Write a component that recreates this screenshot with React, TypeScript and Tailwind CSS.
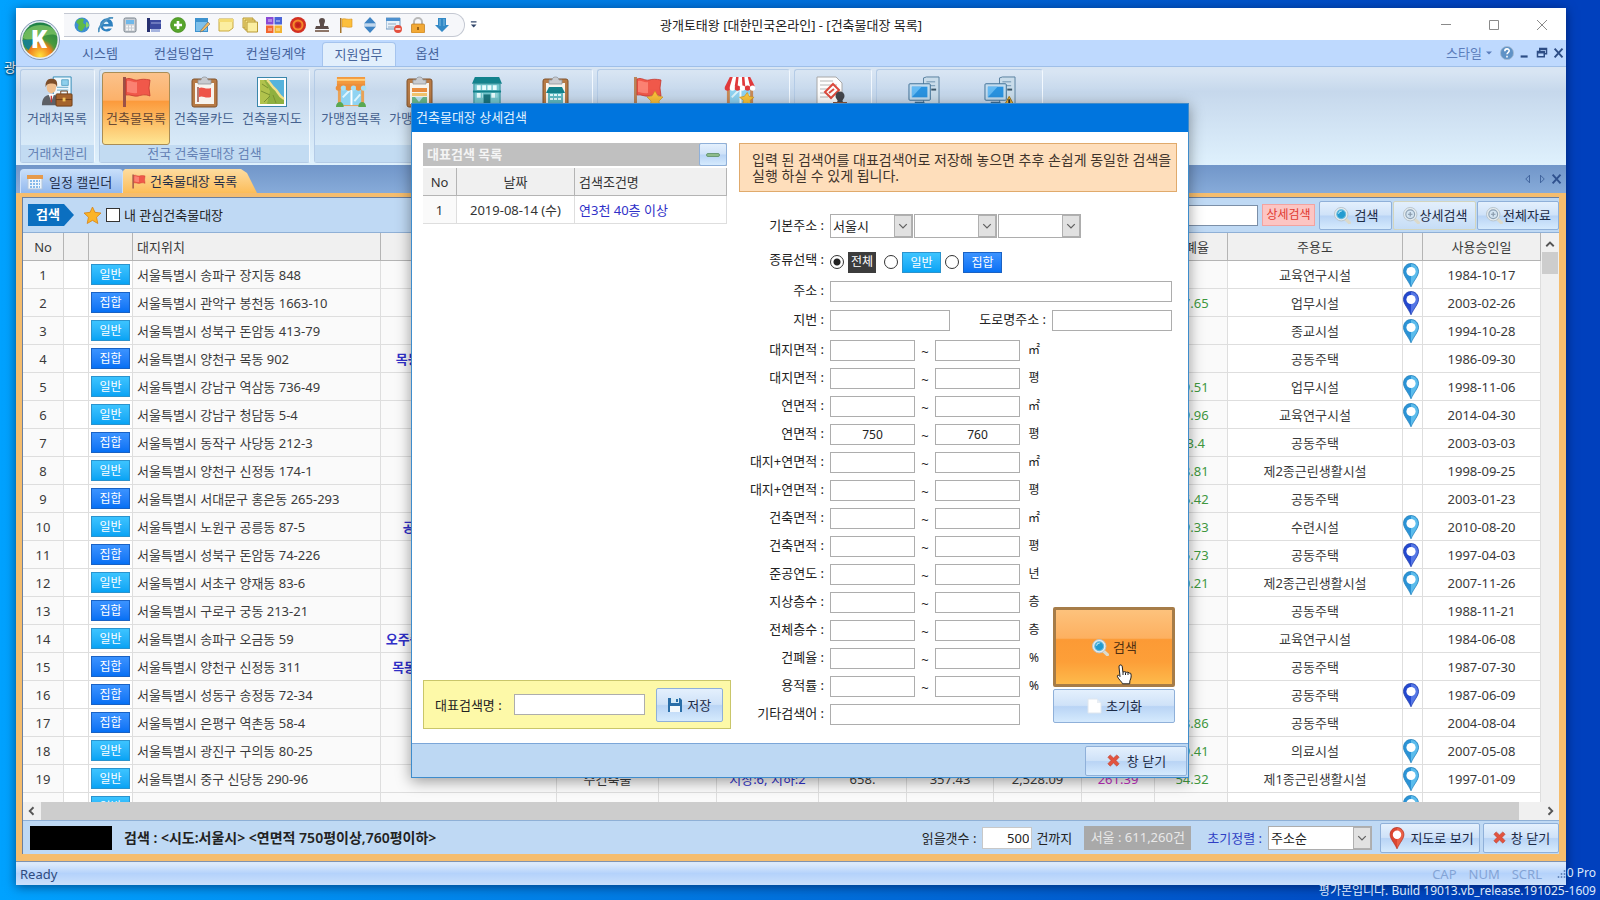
import React from "react";

type Kind = "일반" | "집합";

type Row = {
  kind: Kind;
  addr: string;
  name?: string;
  ratio?: string;
  use: string;
  pin?: "light" | "dark";
  date: string;
  extra?: string[];
};

const rows: Row[] = [
  { kind: "일반", addr: "서울특별시 송파구 장지동 848", use: "교육연구시설", pin: "light", date: "1984-10-17" },
  { kind: "집합", addr: "서울특별시 관악구 봉천동 1663-10", ratio: "57.65", use: "업무시설", pin: "dark", date: "2003-02-26" },
  { kind: "일반", addr: "서울특별시 성북구 돈암동 413-79", use: "종교시설", pin: "light", date: "1994-10-28" },
  { kind: "집합", addr: "서울특별시 양천구 목동 902", name: "목동신시가지아파트 902동", use: "공동주택", date: "1986-09-30" },
  { kind: "일반", addr: "서울특별시 강남구 역삼동 736-49", ratio: "59.51", use: "업무시설", pin: "light", date: "1998-11-06" },
  { kind: "일반", addr: "서울특별시 강남구 청담동 5-4", ratio: "49.96", use: "교육연구시설", pin: "light", date: "2014-04-30" },
  { kind: "집합", addr: "서울특별시 동작구 사당동 212-3", ratio: "53.4", use: "공동주택", date: "2003-03-03" },
  { kind: "일반", addr: "서울특별시 양천구 신정동 174-1", ratio: "58.81", use: "제2종근린생활시설", date: "1998-09-25" },
  { kind: "집합", addr: "서울특별시 서대문구 홍은동 265-293", ratio: "56.42", use: "공동주택", date: "2003-01-23" },
  { kind: "일반", addr: "서울특별시 노원구 공릉동 87-5", name: "공릉청소년문화정보센터", ratio: "39.33", use: "수련시설", pin: "light", date: "2010-08-20" },
  { kind: "집합", addr: "서울특별시 성북구 돈암동 74-226", ratio: "55.73", use: "공동주택", pin: "dark", date: "1997-04-03" },
  { kind: "일반", addr: "서울특별시 서초구 양재동 83-6", ratio: "50.21", use: "제2종근린생활시설", pin: "light", date: "2007-11-26" },
  { kind: "집합", addr: "서울특별시 구로구 궁동 213-21", use: "공동주택", date: "1988-11-21" },
  { kind: "일반", addr: "서울특별시 송파구 오금동 59", name: "오주중학교 본관동 및 체육관동", use: "교육연구시설", date: "1984-06-08" },
  { kind: "집합", addr: "서울특별시 양천구 신정동 311", name: "목동신시가지아파트 1311동", use: "공동주택", date: "1987-07-30" },
  { kind: "집합", addr: "서울특별시 성동구 송정동 72-34", use: "공동주택", pin: "dark", date: "1987-06-09" },
  { kind: "집합", addr: "서울특별시 은평구 역촌동 58-4", ratio: "58.86", use: "공동주택", date: "2004-08-04" },
  { kind: "일반", addr: "서울특별시 광진구 구의동 80-25", ratio: "59.41", use: "의료시설", pin: "light", date: "2007-05-08" },
  {
    kind: "일반", addr: "서울특별시 중구 신당동 290-96", ratio: "54.32", use: "제1종근린생활시설", pin: "light", date: "1997-01-09",
    extra: ["주건축물", "", "지상:6, 지하:2", "658.", "357.43", "2,528.09", "261.39"],
  },
  { kind: "일반", addr: "", use: "", pin: "light", date: "" },
];

const extraColors = ["", "", "text-[#3030c8]", "", "", "", "text-[#c22fc2]"];

const ranges = [
  ["대지면적", "㎡"],
  ["대지면적", "평"],
  ["연면적", "㎡"],
  ["연면적", "평", "750", "760"],
  ["대지+연면적", "㎡"],
  ["대지+연면적", "평"],
  ["건축면적", "㎡"],
  ["건축면적", "평"],
  ["준공연도", "년"],
  ["지상층수", "층"],
  ["전체층수", "층"],
  ["건폐율", "%"],
  ["용적률", "%"],
];

const blueBtn =
  "flex items-center justify-center rounded-[2px] border border-[#8fb0d9] bg-[linear-gradient(#e4f0fd,#cfe2f8_48%,#b9d4f5_52%,#d5eafd)] text-[#1c2a45]";
const field = "border border-[#adadad] bg-white px-1 outline-none";

function Svg({ size = 16, box = 16, children }: { size?: number; box?: number; children: React.ReactNode }) {
  return (
    <svg width={size} height={size} viewBox={`0 0 ${box} ${box}`} className="shrink-0" aria-hidden="true">
      {children}
    </svg>
  );
}

function Pin({ fill, shade, stroke, size = 24 }: { fill: string; shade: string; stroke: string; size?: number }) {
  return (
    <Svg size={size} box={24}>
      <path d="M12 .5C7.600.5 4.500 4 4.500 8.300 4.500 13 9 17 12 23.800 15 17 19.500 13 19.500 8.300 19.500 4 16.400.5 12 .5Z" fill={fill} stroke={stroke} strokeWidth=".8" />
      <path d="M12 1v22c3-6.500 7-10 7-14.700C19 4.300 16 1 12 1Z" fill={shade} />
      <circle cx="12" cy="8.500" r="4.600" fill="#fff" />
    </Svg>
  );
}

function Magnifier({ on }: { on?: boolean }) {
  return (
    <Svg size={18}>
      <path d="M10.500 11l4 3.800" stroke="#dcdacb" strokeWidth="3" strokeLinecap="round" />
      <circle cx="7.300" cy="7.300" r="6" fill="#e4ebef" stroke="#b6c2c9" strokeWidth=".8" />
      <circle cx="7.300" cy="7.300" r="3.900" fill={on ? "#239bd0" : "#d3e4f2"} stroke={on ? "#62b9dd" : "#8da1b3"} />
      {!on && <path d="M7.300 5.300v4M5.300 7.300h4" stroke="#8596a8" />}
      {on && <path d="M4.800 6.800c.5-1.600 1.500-2.200 3-2.300" stroke="#bfeaf9" fill="none" />}
    </Svg>
  );
}

function RedX() {
  return (
    <Svg size={15}>
      <path d="M2 4.500L4.500 2 8 5.300 11.500 2 14 4.500 10.700 8 14 11.500 11.500 14 8 10.700 4.500 14 2 11.500 5.300 8Z" fill="#e2533f" stroke="#b8402f" strokeWidth=".6" />
    </Svg>
  );
}

function Flag({ size = 32, star }: { size?: number; star?: boolean }) {
  return (
    <Svg size={size} box={32}>
      <path d="M3 1h3v30H3z" fill={star ? "#b9855a" : "#9c5046"} />
      <path d="M6 3c4-2 8 2 12 1s7-1 12 0l-1 8 1 8c-5-2-8-1-12 0s-8-2-12-1z" fill="#f0584a" stroke="#c5382f" strokeWidth=".8" />
      <path d="M7 5c4-1 6 2 10 1v11c-4 1-7-1-10-1z" fill="#fb8172" />
      {star && <path d="M24 15l3 5 5 1-4 4 1 6-5-3-5 3 1-6-4-4 5-1z" fill="#fbbf3a" stroke="#cb8f1c" strokeWidth=".6" />}
    </Svg>
  );
}

function Clipboard({ kind }: { kind: "flag" | "shop" | "building" }) {
  return (
    <Svg size={32} box={32}>
      <rect x="4" y="3" width="25" height="28" rx="2" fill="#b77a45" stroke="#80522c" />
      <rect x="7" y="7" width="19" height="21" fill="#f7f4ee" />
      <path d="M10 4h3c0-4 7-4 7 0h3v4H10z" fill="#c8cbd0" stroke="#8f949b" strokeWidth=".8" />
      {kind === "flag" && (
        <>
          <path d="M10 11v15" stroke="#9c5046" strokeWidth="1.500" />
          <path d="M11 12c4-2 6 2 12 0v9c-6 2-8-2-12 0z" fill="#ee5548" />
        </>
      )}
      {kind === "shop" && (
        <>
          <path d="M9 12h15v4H9z" fill="#e98d3e" />
          <path d="M9 17h15v3H9z" fill="#f5c66e" />
          <path d="M9 21h15v6H9z" fill="#69b88c" />
          <path d="M12 21h8l-4 5z" fill="#b8e2f2" />
        </>
      )}
      {kind === "building" && (
        <>
          <path d="M10 11h13l3 6H7z" fill="#12828c" />
          <path d="M9 17h15v11H9z" fill="#62bcc4" />
          <path d="M11 19h11M11 23h11" stroke="#e4fbfc" strokeWidth="2" strokeDasharray="3 1" />
        </>
      )}
    </Svg>
  );
}

function Client() {
  return (
    <Svg size={32} box={34}>
      <path d="M13 1h19v20H13z" fill="#eef8fd" stroke="#2d87b3" />
      <path d="M22 4h7v6h-7zM17 12h12M17 15h12" fill="#8ed0ed" stroke="#5fa5c8" />
      <path d="M1 31c0-8 4-11 10-11s9 4 9 11z" fill="#5d6066" />
      <path d="M8 19h6l-3 8z" fill="#fff" />
      <path d="M11 21v7" stroke="#cb3b38" strokeWidth="1.500" />
      <ellipse cx="11" cy="12" rx="5" ry="6.500" fill="#efbf8f" />
      <path d="M5 12c-1-7 3-10 7-9 4 0 6 3 5 9-1-3-2-4-5-4s-6 0-7 4z" fill="#7d4e2a" />
      <rect x="16" y="19" width="17" height="13" rx="1" fill="#a4632d" stroke="#6e3d17" />
      <path d="M21 19v-3h7v3M16 25h17" stroke="#6e3d17" fill="none" />
      <path d="M23 23h3v4h-3z" fill="#f3c35b" />
    </Svg>
  );
}

function MapIcon() {
  return (
    <Svg size={32} box={32}>
      <rect x="1.500" y="1.500" width="29" height="29" fill="#fdfdfd" stroke="#3a86ab" />
      <path d="M4 4h24v24H4z" fill="#55b3dc" />
      <path d="M4 4h7c3 2 4 6 8 9 3 2 3 7 9 10v5H4z" fill="#8fb03f" />
      <path d="M11 4c3 2 4 6 8 9 3 2 3 7 9 10" stroke="#f1e08a" strokeWidth="2.500" fill="none" />
      <path d="M4 4h4l6 11-3 13H4z" fill="#b1c24c" />
      <path d="M6 8l6 4M5 15l9 4M8 26l6-6M20 27l-3-8" stroke="#7a9131" fill="none" />
    </Svg>
  );
}

function Shop({ red }: { red?: boolean }) {
  const a = red ? "#e0393b" : "#ec8f3b";
  const b = red ? "#fff" : "#a8dff5";
  return (
    <Svg size={32} box={33}>
      <path d="M3 12h27v19H3z" fill={red ? "#c98a58" : "#e9a257"} />
      <path d="M6 14h21v16H6z" fill="#8fd3f2" />
      <path d="M17 14v16" stroke="#fff" strokeWidth="2" />
      <path d="M8 22l7-7M20 26l6-7" stroke="#def5fd" strokeWidth="2" />
      {!red && <path d="M2 1h29v8H2z" fill="#f39a3e" />}
      {!red && <path d="M2 4h29" stroke="#ffd181" strokeWidth="2" />}
      <path d={red ? "M6 1h21l5 10H1z" : "M2 8h29v6H2z"} fill={a} />
      {red && <path d="M9 1h3.500l-1.500 10H6zM15 1h3.500l.5 10h-5zM21 1h3.500L27 11h-5z" fill="#fff" />}
      {[0, 1, 2, 3, 4, 5].map((i) => (
        <circle key={i} cx={3.5 + i * 5.2} cy="12.500" r="2.800" fill={i % 2 ? b : a} />
      ))}
      {red && <path d="M24 17l2 4 5 1-4 3 1 6-4-3-5 3 1-6-4-3 5-1z" fill="#fbc53c" stroke="#c98d19" strokeWidth=".6" />}
      {!red && <path d="M1 32c0-7 8-7 8 0zM24 32c0-7 8-7 8 0z" fill="#5aa852" />}
    </Svg>
  );
}

function Building() {
  return (
    <Svg size={32} box={33}>
      <path d="M4 1h25l3 7H1z" fill="#12828c" />
      <path d="M3 8h27v23H3z" fill="#74c7cf" stroke="#2e8c95" />
      <path d="M6 12h21M6 20h6M21 20h6" stroke="#e8fcfd" strokeWidth="5" strokeDasharray="4 1.500" />
      <path d="M2 16h29" stroke="#12828c" strokeWidth="2" />
      <path d="M13 19h7v12h-7z" fill="#1d7780" />
    </Svg>
  );
}

function Stamped() {
  return (
    <Svg size={33} box={33}>
      <path d="M2 1h19l6 6v25H2z" fill="#fdfdfd" stroke="#a8a8a8" />
      <path d="M5 5h13M5 9h17M5 13h8M5 17h6M5 21h8" stroke="#b5b5b5" />
      <path d="M18 8l6 6-8 8-6-6z" fill="none" stroke="#dd4a3d" strokeWidth="2" />
      <path d="M14 17l5-4" stroke="#dd4a3d" strokeWidth="2" />
      <circle cx="25" cy="20" r="4.500" fill="#43464d" />
      <path d="M23 22h4l1 5h-6z" fill="#43464d" />
      <path d="M18 26h14v5H18z" fill="#8f573a" />
    </Svg>
  );
}

function Computer({ warn }: { warn?: boolean }) {
  return (
    <Svg size={32} box={33}>
      <path d="M16 2l3-1h13v30H16z" fill="#c9dcea" stroke="#58809f" />
      <path d="M19 6h9M19 10h9" stroke="#6d93ae" />
      <path d="M24 14h5" stroke="#3a5467" strokeWidth="2" />
      <rect x="1" y="8" width="22" height="17" rx="1" fill="#c3dcee" stroke="#3f7197" />
      <rect x="4" y="11" width="16" height="11" fill="#2a93e0" />
      <path d="M4 22l10-11H4z" fill="#63b9f3" />
      <path d="M7 28h10" stroke="#3f7197" strokeWidth="3" />
      {warn && <path d="M26 21l6 11H20z" fill="#f8bb35" stroke="#9a741e" />}
      {warn && <path d="M26 24v4" stroke="#333" strokeWidth="2" />}
    </Svg>
  );
}

// quick access icons, in toolbar order
const quickIcons: [string, React.ReactNode][] = [
  ["웹", <><circle cx="8" cy="8" r="7.500" fill="#3f8fd0" /><path d="M2 5c2-4 6-4 8-3l-1 4 3 2-4 6C4 14 3 10 5 8z" fill="#5fbb46" /><path d="M12 5c2 0 3 2 3 4l-3 2z" fill="#8bd765" /></>],
  ["탐색기", <><path d="M14.500 5.500A6.500 6.500 0 1 0 14 11.500h-4a3 3 0 0 1-5-2h10z" fill="#2e81c0" /><path d="M5.500 7h5a2.500 2.500 0 0 0-5 0z" fill="#d9effb" /><path d="M1 15C-1 11 9-1 15 1" stroke="#4f93c0" strokeWidth="2" fill="none" /></>],
  ["계산기", <><rect x="2" y="1" width="12" height="14" rx="1.500" fill="#c8cdd3" stroke="#78828c" /><path d="M4 3h8v4H4z" fill="#6fb8ea" /><path d="M4 9.500h8M4 12.500h8" stroke="#f6f6f6" strokeWidth="2" strokeDasharray="2 1" /></>],
  ["문서", <><path d="M1 1h3v14H1z" fill="#27306f" /><path d="M4 3h11v9H4z" fill="#3c4aa0" /><path d="M5 6h10" stroke="#c7d0f3" strokeWidth=".7" /><path d="M5 12h9v3H5z" fill="#a6b4df" /></>],
  ["추가", <><circle cx="8" cy="8" r="7.500" fill="#57a52c" stroke="#3e8419" strokeWidth=".6" /><path d="M8 4v8M4 8h8" stroke="#fff" strokeWidth="2.600" /></>],
  ["편집", <><path d="M1 1h13v14H1z" fill="#3d93cf" /><path d="M2 5h11v9H2z" fill="#7fc0ea" /><path d="M7 13l7-8 2 2-7 7-3 1z" fill="#f1b95e" stroke="#5d6b76" strokeWidth=".6" /></>],
  ["메모", <><path d="M1 2h14v9l-4 3H1z" fill="#fbeea0" stroke="#c9a93f" /><path d="M1 2h14v3H1z" fill="#f4dc72" /></>],
  ["메모 목록", <><path d="M1 1h10v10H1z" fill="#f6e184" stroke="#b79835" /><path d="M3 3h10v10H3z" fill="#f6e184" stroke="#b79835" /><path d="M5 5h10.500v10H5z" fill="#fbeea0" stroke="#b79835" /></>],
  ["색상", <><path d="M0 0h7.500v7.500H0z" fill="#8a49d5" /><path d="M8.500 0H16v7.500H8.500z" fill="#4a64d8" /><path d="M0 8.500h7.500V16H0z" fill="#f3662e" /><path d="M8.500 8.500H16V16H8.500z" fill="#f2b532" /><path d="M2 2h4v3H2zM10 3h4v2h-4zM2 11h4v3H2zM10 11h4v3h-4z" fill="#fff" opacity=".35" /></>],
  ["알림", <><circle cx="8" cy="8" r="8" fill="#d22f22" /><circle cx="8" cy="8" r="4.500" fill="none" stroke="#f58a2a" strokeWidth="2" /><circle cx="8" cy="8" r="2" fill="#c01f1a" /></>],
  ["도장", <><path d="M5 4a3 3 0 1 1 6 0c0 2-1.500 3-1 5h4l1 3H1l1-3h4c.5-2-1-3-1-5z" fill="#5b4c49" /><path d="M1 13h14v2H1z" fill="#8d7568" /></>],
  ["깃발", <><path d="M2 1h1.500v15H2z" fill="#a6762c" /><path d="M4 2c3-1 5 1 10 0v8c-5 1-7-1-10 0z" fill="#fcbf3b" stroke="#d8921e" strokeWidth=".6" /></>],
  ["정렬", <><path d="M8 0l6 6.500H2zM8 16l6-6.500H2z" fill="#3f84c4" /><path d="M2 8h12" stroke="#8cb7de" /></>],
  ["일정 삭제", <><path d="M0 1h14v11H0z" fill="#e7f1fa" stroke="#6f99c0" /><path d="M0 1h14v3H0z" fill="#4e91cf" /><path d="M2 7h8M2 10h6" stroke="#92abc2" /><circle cx="12" cy="12" r="4" fill="#e4503f" /><path d="M9.500 12h5" stroke="#fff" strokeWidth="1.500" /></>],
  ["잠금", <><path d="M4 8V5a4 4 0 0 1 8 0v3" stroke="#b9b9b9" strokeWidth="2" fill="none" /><rect x="1.500" y="7" width="13" height="9" rx="1" fill="#f2a936" stroke="#bd7917" strokeWidth=".7" /><path d="M8 10v3" stroke="#7c4a09" strokeWidth="1.500" /></>],
  ["내려받기", <><path d="M4 1h8v7h3l-7 7-7-7h3z" fill="#3289c6" /><path d="M6 2v7M10 2v7" stroke="#7dbbe2" /></>],
];

function TitleBar() {
  return (
    <div className="relative flex h-8 shrink-0 items-center bg-white pt-0.5 pl-12">
      <svg width="44" height="44" viewBox="0 0 44 44" className="absolute top-2.5 left-0.5 z-10" role="img" aria-label="K">
        <defs>
          <radialGradient id="orb" cx="50%" cy="95%" r="95%">
            <stop offset="0" stopColor="#ffe23c" />
            <stop offset=".35" stopColor="#f07c1c" />
            <stop offset=".5" stopColor="#4a9a3c" />
            <stop offset="1" stopColor="#1b7f48" />
          </radialGradient>
        </defs>
        <circle cx="22" cy="22" r="19.500" fill="#e6edf4" stroke="#8197b3" />
        <circle cx="22" cy="22" r="17.500" fill="url(#orb)" />
        <path d="M5 20C7 3 37 3 39 18c-9-6-22 8-34 2z" fill="#8ed06b" opacity=".65" />
        <path d="M4.500 22c1 5 3 8 6 10 3-4 4-8 11-11z" fill="#17818c" />
        <text x="21" y="30" textAnchor="middle" fontSize="24" fontWeight="800" fill="#fff" fontFamily="Open Sans, sans-serif">K</text>
      </svg>
      <div className="flex h-6 items-center gap-2 rounded-r-full border border-l-0 border-[#c4c8d2] bg-[#f6f7fa] pr-3.5 pl-2.5">
        {quickIcons.map(([label, art]) => (
          <button key={label} aria-label={label}>
            <Svg>{art}</Svg>
          </button>
        ))}
      </div>
      <button aria-label="도구 모음 사용자 지정" className="ml-1">
        <Svg size={10}>
          <path d="M3 3h9" stroke="#32476b" strokeWidth="2" />
          <path d="M3 7h9l-4.500 5z" fill="#32476b" />
        </Svg>
      </button>
      <h1 className="absolute left-1/2 -translate-x-1/2 text-[13px] whitespace-nowrap text-[#222]">
        광개토태왕 [대한민국온라인] - [건축물대장 목록]
      </h1>
      <div className="ml-auto flex items-center gap-8 pr-4 text-[#8a8a8a]">
        <button aria-label="최소화"><Svg><path d="M3 7.500h10" stroke="currentColor" /></Svg></button>
        <button aria-label="최대화"><Svg><path d="M3.500 3.500h9v9h-9z" fill="none" stroke="currentColor" /></Svg></button>
        <button aria-label="닫기"><Svg><path d="M3 3l10 10M13 3L3 13" stroke="currentColor" /></Svg></button>
      </div>
    </div>
  );
}

function MenuBar() {
  const item = "px-4 pb-0.5 text-[#45639c]";
  return (
    <nav className="flex h-[26px] shrink-0 items-stretch bg-[#bed9fe] pt-0.5 pl-[50px]">
      <button className={item}>시스템</button>
      <button className={`ml-1 ${item}`}>컨설팅업무</button>
      <button className={item}>컨설팅계약</button>
      <button className="w-[74px] rounded-t border border-b-0 border-[#a5c4ee] bg-[#e2effc] pb-0.5 text-[#45639c]">지원업무</button>
      <button className={`ml-1 ${item}`}>옵션</button>
      <div className="ml-auto flex items-center gap-1 pb-0.5 text-[#2d4d85]">
        <button className="flex items-center gap-1 text-[#5b7dbb]">
          스타일
          <Svg size={6}><path d="M0 4h16l-8 8z" fill="currentColor" /></Svg>
        </button>
        <button aria-label="도움말" className="ml-1">
          <Svg size={14}>
            <circle cx="8" cy="8" r="7.500" fill="#5f92c6" stroke="#a3bad3" />
            <path d="M5.500 6c0-3.500 5-3.500 5-.5 0 2-2.500 2-2.500 4M8 11v2" stroke="#fff" strokeWidth="1.800" fill="none" />
          </Svg>
        </button>
        <button aria-label="창 최소화"><Svg size={14}><path d="M3 12h8" stroke="currentColor" strokeWidth="2.500" /></Svg></button>
        <button aria-label="창 복원"><Svg size={12}><path d="M5 5V2h9v7h-3M2 6h9v7H2zM2 7.500h9M5 3h9" fill="none" stroke="currentColor" strokeWidth="2" /></Svg></button>
        <button aria-label="창 닫기"><Svg size={14}><path d="M3 3l9 10M12 3L3 13" stroke="currentColor" strokeWidth="2.200" /></Svg></button>
      </div>
    </nav>
  );
}

function Tool({ icon, label, width = "w-[68px]", active }: { icon: React.ReactNode; label: string; width?: string; active?: boolean }) {
  return (
    <button
      className={`flex h-[73px] shrink-0 flex-col items-center rounded-[3px] pt-[3px] whitespace-nowrap ${width} ${
        active
          ? "border border-[#a98d56] bg-[linear-gradient(#fbc28b,#fcb16a_38%,#fc9a3c_40%,#fee694)] text-[#6b4a33]"
          : "border border-transparent text-[#46628f]"
      }`}
    >
      <span className="flex h-[34px] items-start">{icon}</span>
      <span className="leading-4">{label}</span>
    </button>
  );
}

function Group({ caption, width, children }: { caption: string; width: string; children: React.ReactNode }) {
  return (
    <section className={`flex shrink-0 flex-col rounded-[3px] border border-[#b4cbe6] border-r-[#f2f8fe] ${width}`}>
      <div className="flex flex-1 px-[2px] pt-0.5">{children}</div>
      <h2 className="h-[18px] bg-[#c2dbf2] text-center leading-4 text-[#6582b5]">{caption}</h2>
    </section>
  );
}

function Ribbon() {
  return (
    <div className="flex h-[99px] shrink-0 gap-1 border-t border-[#9fbfe8] bg-linear-to-b from-[#d8e5f3] from-5% via-[#c6d8ec] via-25% to-[#dff1fd] px-1 pt-0.5 pb-0.5">
      <Group caption="거래처관리" width="w-[75px]">
        <Tool icon={<Client />} label="거래처목록" />
      </Group>
      <Group caption="전국 건축물대장 검색" width="w-[211px]">
        <Tool icon={<Flag />} label="건축물목록" active />
        <Tool icon={<Clipboard kind="flag" />} label="건축물카드" />
        <Tool icon={<MapIcon />} label="건축물지도" />
      </Group>
      <Group caption="가맹점관리" width="w-[279px]">
        <Tool icon={<Shop />} label="가맹점목록" />
        <Tool icon={<Clipboard kind="shop" />} label="가맹점카드" />
        <Tool icon={<Building />} label="건물목록" />
        <Tool icon={<Clipboard kind="building" />} label="건물카드" />
      </Group>
      <Group caption="관심목록" width="w-[193px]">
        <Tool icon={<Flag star />} label="관심건축물" width="w-[93px]" />
        <Tool icon={<Shop red />} label="관심가맹점" width="w-[93px]" />
      </Group>
      <Group caption="문서" width="w-[78px]">
        <Tool icon={<Stamped />} label="문서" />
      </Group>
      <Group caption="원격지원" width="w-[167px]">
        <span className="w-2" />
        <Tool icon={<Computer />} label="원격지원" width="w-[74px]" />
        <Tool icon={<Computer warn />} label="원격요청" width="w-[78px]" />
      </Group>
    </div>
  );
}

function TabStrip() {
  return (
    <div className="flex h-7 shrink-0 items-end bg-linear-to-b from-[#7196c9] to-[#87abd9] pl-1 text-[#1f2d47]">
      <button className="flex h-6 w-[103px] items-center gap-1.5 rounded-t border border-b-0 border-[#c9dffa] bg-linear-to-b from-[#c7defa] to-[#93b9ee] pl-1.5">
        <Svg size={16}>
          <path d="M1 2h14v13H1z" fill="#eef5fb" stroke="#b3c6dc" />
          <path d="M0 1h16v4H0z" fill="#e59a4c" />
          <path d="M3 7h10M3 10h10M3 13h10" stroke="#86b9ea" strokeWidth="2" strokeDasharray="2 1" />
        </Svg>
        일정 캘린더
      </button>
      <button className="flex h-6 w-[134px] items-center gap-1 bg-linear-to-b from-[#fddc9f] to-[#fcbd58] pl-2 [clip-path:polygon(2px_0,118px_0,124px_4px,134px_100%,0_100%,0_2px)]">
        <Flag size={15} />
        <span>건축물대장 목록</span>
      </button>
      <div className="ml-auto flex h-7 items-center gap-0.5 pr-0.5 text-[#2f518e]">
        <button aria-label="이전 탭"><Svg size={12}><path d="M10 3v10L5 8z" fill="none" stroke="currentColor" /></Svg></button>
        <button aria-label="다음 탭"><Svg size={12}><path d="M6 3v10l5-5z" fill="none" stroke="currentColor" /></Svg></button>
        <button aria-label="탭 닫기"><Svg size={14}><path d="M3 3l9 10M12 3L3 13" stroke="currentColor" strokeWidth="2.200" /></Svg></button>
      </div>
    </div>
  );
}

function Badge({ kind }: { kind: Kind }) {
  return (
    <span
      className={`inline-block h-[21px] w-[39px] border text-center text-[12px] leading-5 text-white ${
        kind === "일반"
          ? "border-[#2b93cd] bg-linear-to-b from-[#3cc4ff] to-[#06a3f4]"
          : "border-[#1a62c4] bg-linear-to-b from-[#3b93ff] to-[#0570f4]"
      }`}
    >
      {kind}
    </span>
  );
}

function Select({ label, options, className }: { label: string; options: string[]; className: string }) {
  return (
    <span className={`flex h-6 border border-[#adadad] bg-white ${className}`}>
      <select aria-label={label} className="min-w-0 flex-1 appearance-none pl-0.5 leading-5 outline-none">
        {options.map((o) => (
          <option key={o}>{o}</option>
        ))}
      </select>
      <span className="flex w-[18px] items-center justify-center border border-[#b0b0b0] bg-[#e1e1e1]">
        <Svg size={10}><path d="M2 5l6 6 6-6" fill="none" stroke="#606060" strokeWidth="2" /></Svg>
      </span>
    </span>
  );
}

function SearchBar() {
  return (
    <div className="flex h-[35px] shrink-0 items-center border-b border-[#8fb0d6] bg-[#bfd9f4] pl-[5px]">
      <span className="h-[22px] w-[46px] bg-[#0b6fc0] pl-2 leading-5 font-bold text-white [clip-path:polygon(0_0,36px_0,100%_50%,36px_100%,0_100%)]">
        검색
      </span>
      <span className="ml-2.5">
        <Svg size={17}>
          <path d="M8 0l2.300 5 5.700.7-4.200 3.900L13 15.500 8 12.600 3 15.500l1.200-5.900L0 5.700 5.700 5z" fill="#fbb427" stroke="#d8871a" strokeWidth=".8" />
        </Svg>
      </span>
      <label className="ml-[5px] flex items-center gap-1 text-[#222]">
        <input type="checkbox" className="size-3.5 appearance-none border border-[#333] bg-white" />
        내 관심건축물대장
      </label>
      <div className="ml-auto flex items-center">
        <input aria-label="검색어" className="h-[21px] w-52 border border-[#7b8fa8] bg-white px-1 outline-none" />
        <span className="ml-1 h-[22px] w-[53px] border border-[#f3a3a0] bg-[#fcc5c3] text-center text-[12px] leading-5 text-[#e0392f]">상세검색</span>
        <button className={`${blueBtn} ml-1 h-[29px] w-[73px] gap-1`}><Magnifier on />검색</button>
        <button className="ml-px flex h-[29px] w-[83px] items-center justify-center rounded-[2px] border border-[#d3d5bd] bg-linear-to-b from-[#e3effc] to-[#c6ddf6] text-[#1c2a45]"><Magnifier />상세검색</button>
        <button className={`${blueBtn} ml-px h-[29px] w-[82px]`}><Magnifier />전체자료</button>
      </div>
    </div>
  );
}

function BuildingTable() {
  const td = "h-7 border-r border-b border-[#dedede] p-0 whitespace-nowrap";
  return (
    <div className="flex min-h-0 flex-1 bg-white">
      <div className="min-w-0 flex-1 overflow-hidden">
        <table className="w-full table-fixed border-separate border-spacing-0 text-center text-[#3a3a3a]">
          <colgroup>
            <col className="w-[41px]" />
            <col className="w-[25px]" />
            <col className="w-[44px]" />
            <col className="w-[248px]" />
            <col />
            <col className="w-[102px]" />
            <col className="w-[58px]" />
            <col className="w-[102px]" />
            <col className="w-[88px]" />
            <col className="w-[87px]" />
            <col className="w-[88px]" />
            <col className="w-[73px]" />
            <col className="w-[73px]" />
            <col className="w-[175px]" />
            <col className="w-[20px]" />
            <col className="w-[118px]" />
          </colgroup>
          <thead>
            <tr>
              {["No", "", "", "대지위치", "건물명", "구분", "", "층수", "높이", "건축면적", "연면적", "용적률", "건폐율", "주용도", "", "사용승인일"].map((h, i) => (
                <th key={i} className={`h-7 border-r border-b border-[#b4b4b4] bg-[#f0f0f0] p-0 font-normal ${h === "대지위치" ? "pl-1 text-left" : ""}`}>
                  {h}
                </th>
              ))}
            </tr>
          </thead>
          <tbody>
            {rows.map((r, i) => (
              <tr key={i}>
                <td className={`${td} bg-[#fafafa]`}>{i < 19 ? i + 1 : ""}</td>
                <td className={td} />
                <td className={td}>
                  <div className="flex justify-center"><Badge kind={r.kind} /></div>
                </td>
                <td className={`${td} bg-[#fafafa] pl-1 text-left`}>{r.addr}</td>
                <td className={`${td} overflow-hidden bg-[#fafafa] font-bold text-[#3030c8]`}>{r.name}</td>
                {extraColors.map((c, j) => (
                  <td key={j} className={`${td} bg-[#fafafa] ${c}`}>{r.extra?.[j]}</td>
                ))}
                <td className={`${td} bg-[#fafafa] pl-0.5 text-[#3f983f]`}>{r.ratio}</td>
                <td className={td}>{r.use}</td>
                <td className={td}>
                  {r.pin && (
                    <div className="-mr-1 -ml-2 flex justify-center">
                      {r.pin === "light" ? (
                        <Pin fill="#2b93d6" shade="#5bbcec" stroke="#2583bd" />
                      ) : (
                        <Pin fill="#2348cf" shade="#5577e6" stroke="#2340ac" />
                      )}
                    </div>
                  )}
                </td>
                <td className={td}>{r.date}</td>
              </tr>
            ))}
          </tbody>
        </table>
      </div>
      <div className="flex w-[18px] flex-col items-center bg-[#f0f0f0] pt-[5px]">
        <Svg size={12}><path d="M3 11l5-5 5 5" fill="none" stroke="#555" strokeWidth="2.500" /></Svg>
        <div className="mt-0.5 h-[22px] w-4 bg-[#cdcdcd]" />
      </div>
    </div>
  );
}

function BottomBar() {
  return (
    <>
      <div className="flex h-[18px] shrink-0 items-center justify-between bg-[#f0f0f0] px-[3px]">
        <Svg size={12}><path d="M10 3L5 8l5 5" fill="none" stroke="#555" strokeWidth="2.500" /></Svg>
        <div className="mr-[25px] ml-[3px] h-[18px] flex-1 bg-[#cdcdcd]" />
        <Svg size={12}><path d="M6 3l5 5-5 5" fill="none" stroke="#555" strokeWidth="2.500" /></Svg>
      </div>
      <div className="flex h-[34px] shrink-0 items-center border-t border-[#8fb0d6] bg-[#bfd9f4] pl-[7px] text-[#222]">
        <span className="h-6 w-[82px] bg-black" />
        <strong className="ml-3 text-[14px] font-semibold">검색 : &lt;시도:서울시&gt; &lt;연면적 750평이상,760평이하&gt;</strong>
        <div className="ml-auto flex items-center">
          <label htmlFor="limit">읽을갯수 :</label>
          <input id="limit" defaultValue="500" className="mr-1 ml-1.5 h-[22px] w-[50px] border border-[#c8c8c8] bg-white pr-0.5 text-right outline-none" />
          건까지
          <span className="ml-3 h-6 w-[107px] bg-[#a9a9a9] text-center leading-[22px] text-[#e8e8e8]">서울 : 611,260건</span>
          <span className="mr-1.5 ml-4 text-[#2f3fc4]">초기정렬 :</span>
          <Select label="초기정렬" options={["주소순"]} className="w-[104px]" />
          <button className={`${blueBtn} ml-2 h-[30px] w-[100px] gap-0.5`}>
            <Pin fill="#dc4630" shade="#ea6047" stroke="#b5321f" size={22} />
            지도로 보기
          </button>
          <button className={`${blueBtn} ml-[3px] h-[30px] w-[76px] gap-1`}><RedX />창 닫기</button>
        </div>
      </div>
    </>
  );
}

function FormLabel({ children, htmlFor }: { children: React.ReactNode; htmlFor?: string }) {
  return (
    <label htmlFor={htmlFor} className="w-[91px] shrink-0 pr-1.5 pb-0.5 text-right">
      {children} :
    </label>
  );
}

function SearchDialog() {
  const radio =
    "size-3.5 appearance-none rounded-full border border-[#333] bg-white checked:bg-[radial-gradient(circle_at_center,#222_0_3px,#fff_4px)]";
  return (
    <div
      role="dialog"
      aria-label="건축물대장 상세검색"
      className="absolute top-[103px] left-1/2 z-20 w-[778px] -translate-x-1/2 border border-[#3e8ccc] bg-white text-[#222] shadow-[0_3px_14px_rgba(0,0,0,0.4)]"
    >
      <h2 className="h-7 bg-[#0075de] pl-1 leading-[26px] text-[#e2f1fd]">건축물대장 상세검색</h2>
      <div className="flex h-[611px] gap-2 px-[11px] pt-[11px]">
        <div className="flex w-[308px] flex-col pb-3.5">
          <div className="mr-1 flex h-[23px] bg-[#c0c0c0]">
            <h3 className="flex-1 pl-1 leading-[22px] font-bold text-[#f4f4f4]">대표검색 목록</h3>
            <button aria-label="목록 삭제" className={`${blueBtn} w-7`}>
              <span className="h-1 w-3.5 rounded-xs border border-[#6b9b78] bg-[#8ebc8a]" />
            </button>
          </div>
          <table className="mt-0.5 mr-1 table-fixed border-separate border-spacing-0 text-center text-[#333]">
            <colgroup>
              <col className="w-[34px]" />
              <col className="w-[118px]" />
              <col className="w-[152px]" />
            </colgroup>
            <thead>
              <tr>
                <th className="h-7 border-r border-b border-[#b4b4b4] bg-[#f0f0f0] p-0 font-normal">No</th>
                <th className="h-7 border-r border-b border-[#b4b4b4] bg-[#f0f0f0] p-0 font-normal">날짜</th>
                <th className="h-7 border-r border-b border-[#b4b4b4] bg-[#f0f0f0] p-0 pl-1 text-left font-normal">검색조건명</th>
              </tr>
            </thead>
            <tbody>
              <tr>
                <td className="h-7 border-r border-b border-[#dedede] bg-[#fafafa] p-0">1</td>
                <td className="h-7 border-r border-b border-[#dedede] p-0">2019-08-14 (수)</td>
                <td className="h-7 border-r border-b border-[#dedede] p-0 pl-1 text-left text-[#3030c8]">연3천 40층 이상</td>
              </tr>
            </tbody>
          </table>
          <div className="mt-auto flex h-[49px] items-center border border-[#c9c66a] bg-[#fdf9a8] pl-[11px]">
            <label htmlFor="presetName">대표검색명 :</label>
            <input id="presetName" className={`${field} ml-3 h-[21px] w-[131px]`} />
            <button className={`${blueBtn} ml-[11px] h-[34px] w-[67px] gap-1`}>
              <Svg>
                <path d="M1 1h12l2 2v12H1z" fill="#2a6ea8" />
                <path d="M4 1h8v5H4z" fill="#d4e9f7" />
                <path d="M9 2h2v3H9z" fill="#2a6ea8" />
                <path d="M3 9h10v6H3z" fill="#f3f8fc" />
              </Svg>
              저장
            </button>
          </div>
        </div>

        <div className="flex flex-1 flex-col">
          <p className="h-[49px] border border-[#e0aa6c] bg-[#fedebb] pt-2 pl-3 text-[14px] leading-4 whitespace-nowrap text-[#3f342b]">
            입력 된 검색어를 대표검색어로 저장해 놓으면 추후 손쉽게 동일한 검색을
            <br />
            실행 하실 수 있게 됩니다.
          </p>
          <div className="mt-5 flex h-7 items-center">
            <FormLabel>기본주소</FormLabel>
            <Select label="시도" options={["서울시"]} className="w-[83px]" />
            <Select label="시군구" options={[""]} className="ml-px w-[83px]" />
            <Select label="읍면동" options={[""]} className="ml-px w-[83px]" />
          </div>
          <fieldset className="mt-[9px] flex h-7 items-center">
            <legend className="sr-only">종류선택</legend>
            <span className="w-[91px] shrink-0 pr-1.5 pb-1.5 text-right">종류선택 :</span>
            <label className="flex items-center gap-1">
              <input type="radio" name="kind" defaultChecked className={radio} />
              <span className="h-[21px] w-7 bg-[#3c3c3c] text-center text-[12px] leading-5 text-white">전체</span>
            </label>
            <label className="ml-2 flex items-center gap-1">
              <input type="radio" name="kind" className={radio} />
              <Badge kind="일반" />
            </label>
            <label className="ml-1 flex items-center gap-1">
              <input type="radio" name="kind" className={radio} />
              <Badge kind="집합" />
            </label>
          </fieldset>
          <div className="flex h-7 items-center">
            <FormLabel htmlFor="addr">주소</FormLabel>
            <input id="addr" className={`${field} mr-[5px] h-[21px] min-w-0 flex-1`} />
          </div>
          <div className="mt-px flex h-7 items-center">
            <FormLabel htmlFor="jibun">지번</FormLabel>
            <input id="jibun" className={`${field} h-[21px] w-[120px]`} />
            <label htmlFor="road" className="ml-auto pr-1.5 pb-0.5">도로명주소 :</label>
            <input id="road" className={`${field} mr-[5px] h-[21px] w-[120px]`} />
          </div>
          <div className="mt-0.5 flex">
            <div className="flex-1">
              {ranges.map(([label, unit, from, to], i) => (
                <div key={i} className="flex h-7 items-center">
                  <FormLabel htmlFor={`from${i}`}>{label}</FormLabel>
                  <input id={`from${i}`} defaultValue={from} className={`${field} h-[21px] w-[85px] text-center text-[12px]`} />
                  <span className="w-5 pt-1 text-center leading-4">~</span>
                  <input aria-label={`${label} 까지`} defaultValue={to} className={`${field} h-[21px] w-[85px] text-center text-[12px]`} />
                  <span className="w-7 text-center text-[12px]">{unit}</span>
                </div>
              ))}
              <div className="flex h-7 items-center">
                <FormLabel htmlFor="etc">기타검색어</FormLabel>
                <input id="etc" className={`${field} h-[21px] w-[190px]`} />
              </div>
            </div>
            <div className="mr-0.5 flex w-[122px] flex-col justify-end gap-0.5 pb-[5px]">
              <button className="relative flex h-20 items-center justify-center gap-1 rounded-[2px] border-[3px] border-[#a67c48] bg-[linear-gradient(#fdc27c,#fdb060_38%,#fc9a35_40%,#fd9f38_70%,#fdba4c)] text-[#4f2f10]">
                <Magnifier on />
                검색
                <svg width="16" height="21" viewBox="0 0 16 21" className="absolute top-[54px] left-[60px]" aria-hidden="true">
                  <path d="M4 1c1.500-.3 2.200.6 2.300 2l.6 5 1.800-.3 1.600.6 1.700-.1 1.400.9 1.300.2c1 2.500.3 5-.8 7.500l-.2 3H6.500c-.6-2-3.500-4-5-7C.7 11 2.500 10.500 4 12.500L3 3c-.1-1 .2-1.800 1-2z" fill="#fff" stroke="#222" />
                  <path d="M7 8v3M9.500 8.500V11M12 9v2" stroke="#222" />
                </svg>
              </button>
              <button className={`${blueBtn} h-[34px] gap-1`}>
                <Svg><path d="M2 1h9l4 4v10H2z" fill="#fff" stroke="#dfe6ee" /><path d="M11 1v4h4" fill="#e8eef5" /></Svg>
                초기화
              </button>
            </div>
          </div>
        </div>
      </div>
      <div className="flex h-[34px] items-center justify-end border-t border-[#7ba6d8] bg-[#bdd8f3] pr-px">
        <button className={`${blueBtn} h-[30px] w-[102px] gap-1.5`}><RedX />창 닫기</button>
      </div>
    </div>
  );
}

export default function App() {
  return (
    <div className="relative flex h-screen flex-col overflow-hidden bg-linear-to-r from-[#00a2ff] from-0% via-[#0070dc] via-50% to-[#0040bd] to-95% pt-2 pr-[34px] pb-[15px] pl-4 font-['Noto_Sans','Noto_Sans_CJK_KR',sans-serif] text-[13px] leading-5">
      <span className="absolute top-[57px] left-1 text-white [text-shadow:0_1px_2px_#000]">광</span>
      <div className="relative z-10 flex min-h-0 flex-1 flex-col shadow-[0_2px_10px_rgba(0,0,30,0.5)]">
        <TitleBar />
        <MenuBar />
        <Ribbon />
        <TabStrip />
        <main className="flex min-h-0 flex-1 flex-col border-t-4 border-r-[7px] border-b-[7px] border-l-[6px] border-[#f5bd6e]">
          <div className="flex min-h-0 flex-1 flex-col border-t border-l border-[#6a7f9f]">
            <SearchBar />
            <BuildingTable />
            <BottomBar />
          </div>
        </main>
        <footer className="flex h-6 shrink-0 items-center border-t border-[#7f93b0] bg-linear-to-b from-[#dbe9fb] from-10% via-[#b4d2fb] via-50% to-[#cbe0fb] pl-1 text-[#2f4b7e]">
          Ready
          <div className="ml-auto flex items-center gap-3 text-[#84a4d6]">
            <span>CAP</span>
            <span>NUM</span>
            <span>SCRL</span>
            <Svg size={12}><path d="M13 3h2v2h-2zM13 7h2v2h-2zM9 7h2v2H9zM13 11h2v2h-2zM9 11h2v2H9zM5 11h2v2H5z" fill="#4a6fa8" /></Svg>
          </div>
        </footer>
      </div>
      <p className="absolute right-1 bottom-0 z-30 text-right text-[12px] leading-[18px] text-[#dfe9fb]">
        <span className="block h-[18px] w-[30px] justify-self-end overflow-hidden">0 Pro</span>
        평가본입니다. Build 19013.vb_release.191025-1609
      </p>
      <SearchDialog />
    </div>
  );
}
